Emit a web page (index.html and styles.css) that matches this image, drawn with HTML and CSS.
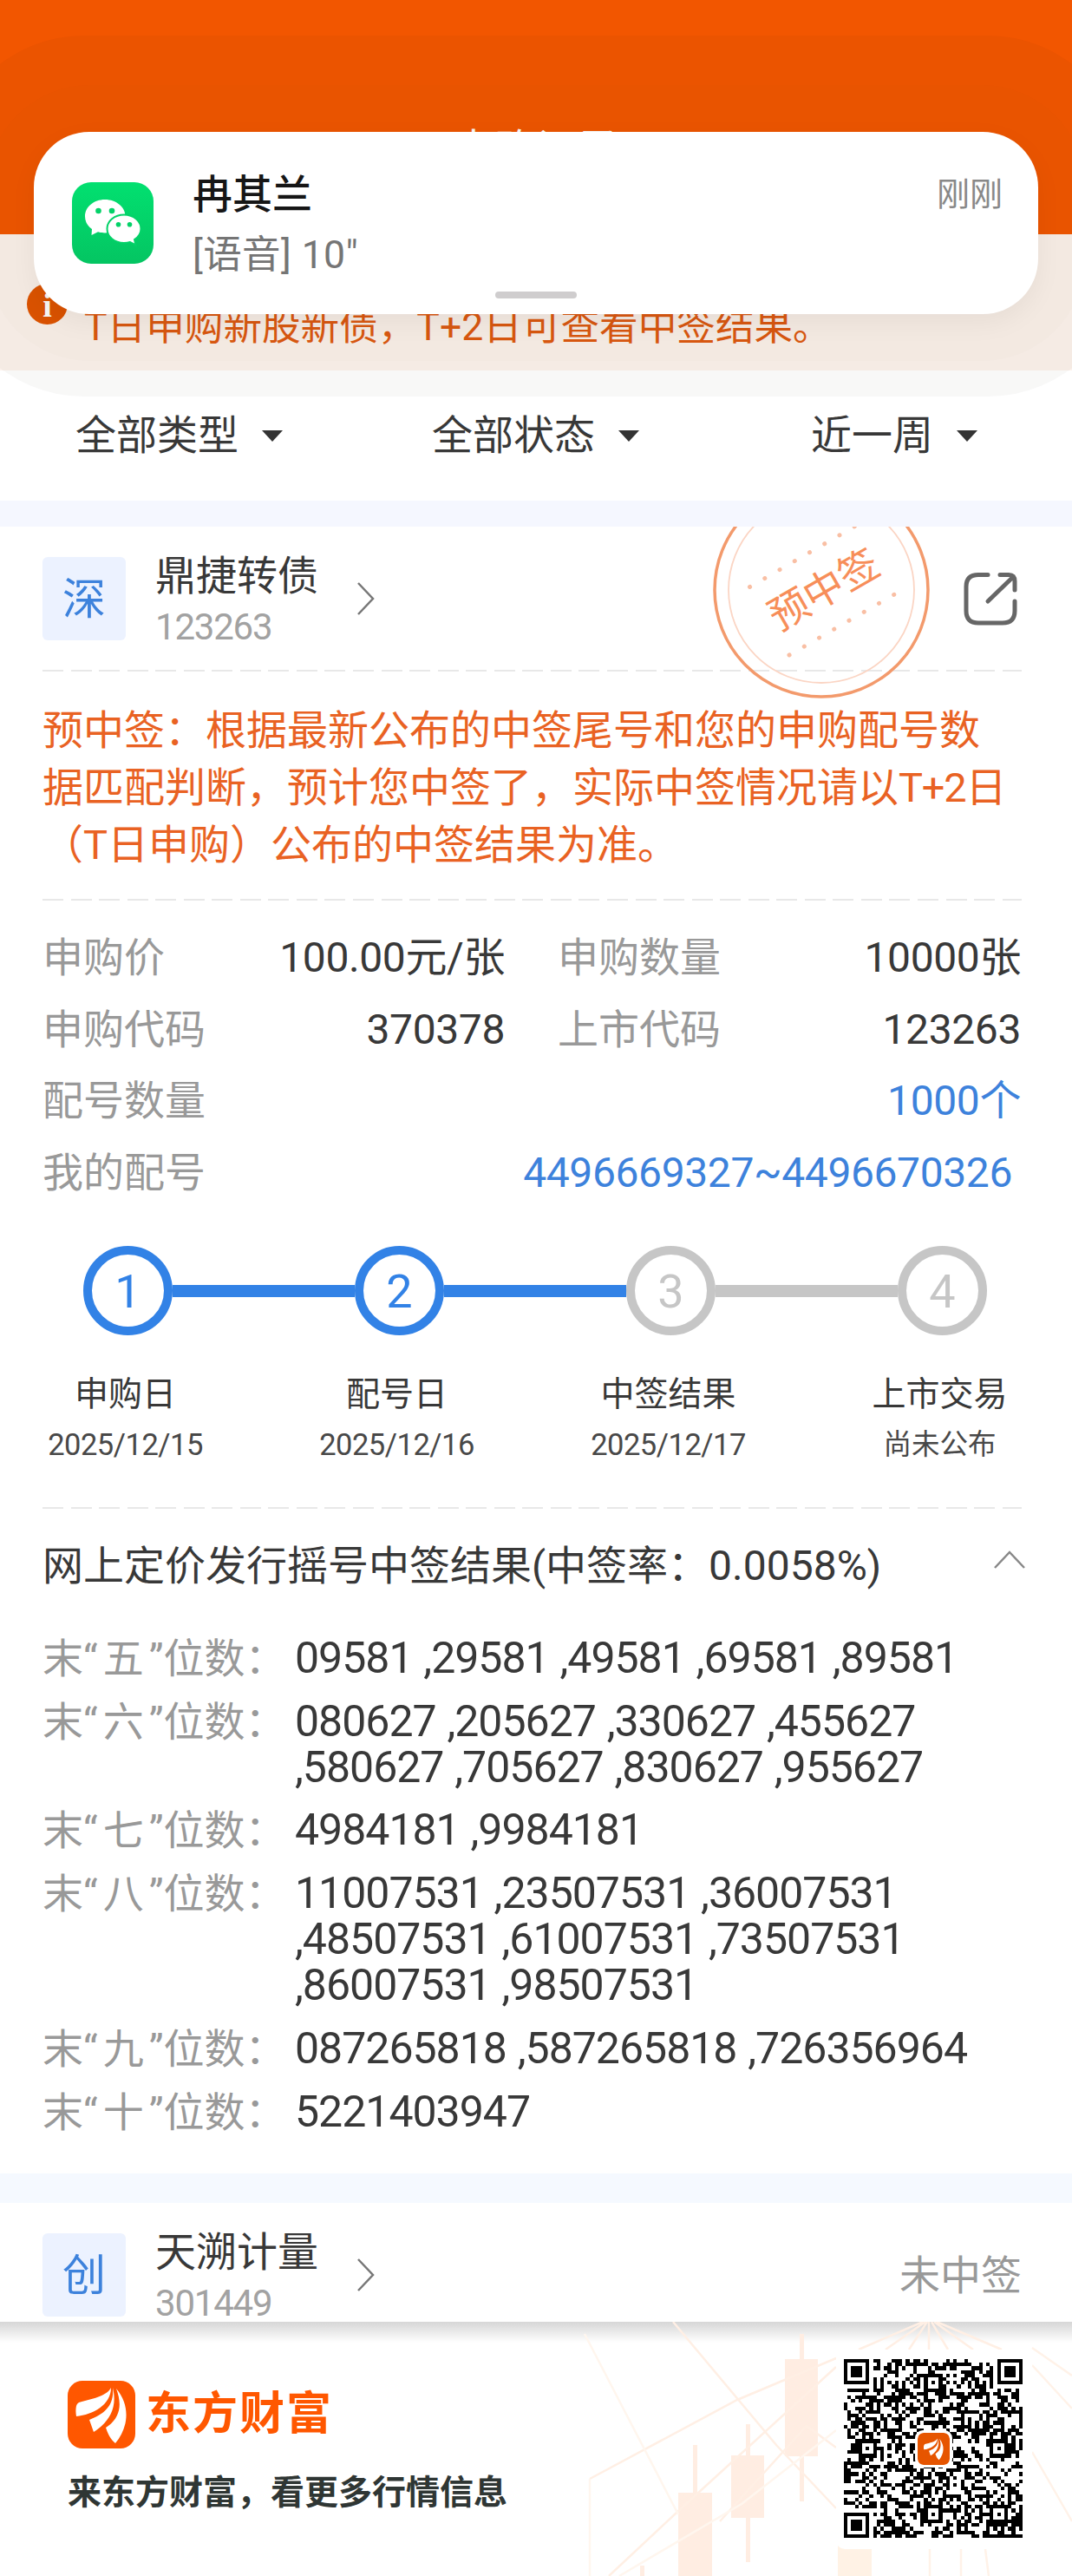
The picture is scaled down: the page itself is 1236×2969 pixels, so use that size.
FILE: index.html
```html
<!DOCTYPE html>
<html lang="zh-CN">
<head>
    <meta charset="UTF-8">
    <meta name="viewport" content="width=device-width, initial-scale=1.0">
    <title>申购记录</title>
    <link rel="stylesheet" href="styles.css">
</head>
<body>
    <div class="page">
        <header class="header">申购记录</header>

        <div class="notice">
            <span class="notice-icon">i</span>
            <span>T日申购新股新债，T+2日可查看中签结果。</span>
        </div>

        <!-- incoming message banner -->
        <div class="banner">
            <svg class="banner-icon" viewBox="0 0 94 94">
                <defs>
                    <linearGradient id="green" x1="0" y1="0" x2="0" y2="1">
                        <stop offset="0" stop-color="#02e070"/>
                        <stop offset="1" stop-color="#04c562"/>
                    </linearGradient>
                </defs>
                <rect width="94" height="94" rx="22" fill="url(#green)"/>
                <path d="M38 20C25 20 15 28.500 15 39.500C15 45.500 18 50.500 23 54L22.500 61L30 57.200C32.500 58 35 58.400 38 58.400C51 58.400 61.500 50 61.500 39.500C61.500 28.500 51 20 38 20Z" fill="#fff"/>
                <path d="M60 37.500C49 37.500 40.500 44.700 40.500 53.800C40.500 63 49 70 60 70C62.500 70 65 69.600 67 69L73.500 72.500L72 66C77 63 79.500 58.800 79.500 53.800C79.500 44.700 71 37.500 60 37.500Z" fill="#fff" stroke="#03d268" stroke-width="2"/>
                <g fill="#03d268">
                    <circle cx="30.500" cy="33" r="3.300"/><circle cx="46" cy="33" r="3.300"/>
                    <circle cx="53.500" cy="48.800" r="2.800"/><circle cx="66.500" cy="48.800" r="2.800"/>
                </g>
            </svg>
            <div class="banner-text">
                <div class="banner-name">冉其兰</div>
                <div class="banner-message">[语音] 10"</div>
            </div>
            <div class="banner-time">刚刚</div>
            <div class="banner-handle"></div>
        </div>

        <nav class="filters">
            <div class="filter">全部类型<i class="arrow"></i></div>
            <div class="filter">全部状态<i class="arrow"></i></div>
            <div class="filter">近一周<i class="arrow"></i></div>
        </nav>

        <section class="card">
            <div class="card-head">
                <div class="badge">深</div>
                <div class="stock">
                    <div class="stock-name">鼎捷转债</div>
                    <div class="stock-code">123263</div>
                </div>
                <svg class="chevron" viewBox="0 0 22 40"><path d="M2 2L19 20L2 38"/></svg>
                <svg class="share" viewBox="0 0 62 62">
                    <path d="M28 3.500H17Q3 3.500 3 17V45Q3 59 17 59H45Q59 59 59 45V34M42 3.500H52Q59 3.500 59 11V21M57 6L28 34"/>
                </svg>
            </div>
            <svg class="stamp" viewBox="0 0 252 252">
                <circle cx="126" cy="126" r="123" fill="none" stroke="#f39a6c" stroke-width="3.500"/>
                <circle cx="126" cy="126" r="107" fill="none" stroke="#fbd5c4" stroke-width="1.800"/>
                <path class="stamp-dots" d="M43.500 122.500L183 42"/>
                <path class="stamp-dots" d="M89 201L213 129.500"/>
                <text x="129" y="142" transform="rotate(-30 129 126)">预中签</text>
            </svg>
            <div class="dash"></div>

            <p class="tip">预中签：根据最新公布的中签尾号和您的申购配号数<br>据匹配判断，预计您中签了，实际中签情况请以<em>T+2</em>日<br>（T日申购）公布的中签结果为准。</p>
            <div class="dash"></div>

            <div class="details">
                <div class="detail"><span>申购价</span><b>100.00元/张</b></div>
                <div class="detail"><span>申购数量</span><b>10000张</b></div>
                <div class="detail"><span>申购代码</span><b>370378</b></div>
                <div class="detail"><span>上市代码</span><b>123263</b></div>
                <div class="detail wide"><span>配号数量</span><b class="link">1000个</b></div>
                <div class="detail wide"><span>我的配号</span><b class="link numbers">4496669327~4496670326</b></div>
            </div>

            <div class="steps">
                <div class="step done">1</div>
                <div class="line done"></div>
                <div class="step done">2</div>
                <div class="line done"></div>
                <div class="step">3</div>
                <div class="line"></div>
                <div class="step">4</div>
            </div>
            <div class="step-labels">
                <div><div class="step-name">申购日</div><div class="step-date">2025/12/15</div></div>
                <div><div class="step-name">配号日</div><div class="step-date">2025/12/16</div></div>
                <div><div class="step-name">中签结果</div><div class="step-date">2025/12/17</div></div>
                <div><div class="step-name">上市交易</div><div class="step-date pending">尚未公布</div></div>
            </div>
            <div class="dash"></div>

            <div class="result-title">
                <span>网上定价发行摇号中签结果(中签率：<em>0.0058%</em>)</span>
                <svg class="fold" viewBox="0 0 36 22"><path d="M1 20L18 2L35 20"/></svg>
            </div>
            <dl class="results">
                <dt>末“<i>五</i>”位数：</dt>
                <dd>09581 ,29581 ,49581 ,69581 ,89581</dd>
                <dt>末“<i>六</i>”位数：</dt>
                <dd>080627 ,205627 ,330627 ,455627<br>,580627 ,705627 ,830627 ,955627</dd>
                <dt>末“<i>七</i>”位数：</dt>
                <dd>4984181 ,9984181</dd>
                <dt>末“<i>八</i>”位数：</dt>
                <dd>11007531 ,23507531 ,36007531<br>,48507531 ,61007531 ,73507531<br>,86007531 ,98507531</dd>
                <dt>末“<i>九</i>”位数：</dt>
                <dd>087265818 ,587265818 ,726356964</dd>
                <dt>末“<i>十</i>”位数：</dt>
                <dd>5221403947</dd>
            </dl>
        </section>

        <section class="card next">
            <div class="card-head">
                <div class="badge">创</div>
                <div class="stock">
                    <div class="stock-name">天溯计量</div>
                    <div class="stock-code">301449</div>
                </div>
                <svg class="chevron" viewBox="0 0 22 40"><path d="M2 2L19 20L2 38"/></svg>
                <div class="status">未中签</div>
            </div>
        </section>

        <footer class="footer">
            <svg class="footer-bg" viewBox="0 0 566 293">
                <g fill="#ffede2">
                    <rect x="112" y="197" width="39" height="96"/><rect x="129" y="142" width="5" height="60"/>
                    <rect x="173" y="154" width="38" height="72"/><rect x="190" y="118" width="5" height="159"/>
                    <rect x="235" y="43" width="38" height="112"/><rect x="252" y="14" width="5" height="193"/>
                    <rect x="296" y="255" width="39" height="38" fill="#fff2e5"/>
                    <rect x="68" y="281" width="5" height="12"/>
                </g>
                <g fill="none" stroke="#ffefe4" stroke-width="2.500">
                    <path d="M106 0L225 142L294 215M10 181L180 90L294 42M32 293L110 220L294 52M160 230L260 120L294 145"/>
                    <path d="M4 14L112 222M10 293V181M44 293L185 210L294 125" stroke="#fff6ee"/>
                    <path d="M394 0L320 32M397 0L351 32M399 0L378 32M401 0V32M404 0L423 32M407 0L452 32M410 0L485 32"/>
                    <path d="M520 30L566 62M520 50L566 100M520 150L566 230M402 262V293M438 262V293M466 262L470 293" stroke="#fff2e8"/>
                </g>
            </svg>
            <div class="brand">
                <div class="brand-row">
                    <svg class="brand-logo" viewBox="0 0 78 78">
                        <rect width="78" height="78" rx="17" fill="#ff5700"/>
                        <g id="feather" fill="#fff">
                            <path d="M50 8C45 18 27 21 13 25C9 27 9 34 10 41C29 39 50 28 50 8Z"/>
                            <path d="M52 8C54 29 42 38 25 45L30 59C47 48 58 32 52 8Z"/>
                            <path d="M56 9C63 27 61 43 44 54C46 60 49 67 55 72C70 54 73 29 56 9Z"/>
                        </g>
                    </svg>
                    <span class="brand-name">东方财富</span>
                </div>
                <div class="slogan">来东方财富，看更多行情信息</div>
            </div>
            <div class="qr">
                <svg viewBox="0 0 49 49" shape-rendering="crispEdges"><path id="qr"/></svg>
                <svg class="qr-logo" viewBox="0 0 78 78">
                    <rect width="78" height="78" rx="15" fill="#e65500"/>
                    <use href="#feather" transform="translate(7 7) scale(.82)"/>
                </svg>
            </div>
        </footer>
    </div>
    <script src="qr.js"></script>
</body>
</html>
```
FILE: styles.css
```css
* {
    box-sizing: border-box;
    margin: 0;
    padding: 0;
}

body {
    font-family: Roboto, 'Noto Sans CJK SC', sans-serif;
    font-size: 47px;
    color: #383838;
    background-color: #fff;
}

i, em {
    font-style: normal;
}

.page {
    position: relative;
    width: 1236px;
    height: 2969px;
    overflow: hidden;
}

.header {
    height: 270px;
    padding-top: 138px;
    font-size: 48px;
    line-height: 70px;
    text-align: center;
    color: #fff;
    background-color: #f25600;
}

.notice {
    display: flex;
    height: 157px;
    padding: 57px 0 0 31px;
    font-size: 44.6px;
    line-height: 101px;
    color: #df5a12;
    background-color: #fcf2ec;
}

.notice-icon {
    width: 47px;
    height: 47px;
    margin-right: 19px;
    border-radius: 50%;
    font: bold 38px/50px 'Liberation Serif', serif;
    text-align: center;
    color: #fff;
    background-color: #e25400;
}

.banner {
    position: absolute;
    top: 152px;
    left: 39px;
    display: flex;
    width: 1158px;
    height: 210px;
    padding: 32px 41px 0 44px;
    border-radius: 64px;
    background-color: #fff;
    box-shadow: 0 10px 30px rgba(0, 0, 0, 0.05),
        0 0 0 54px rgba(120, 60, 0, 0.012),
        0 -8px 0 103px rgba(40, 40, 0, 0.03);
}

.banner-icon {
    width: 94px;
    height: 94px;
    margin-top: 26px;
}

.banner-text {
    flex: 1;
    margin-left: 45px;
}

.banner-name {
    font-size: 46px;
    font-weight: 500;
    line-height: 80px;
    color: #161616;
}

.banner-message {
    font-size: 44.5px;
    line-height: 60px;
    color: #757575;
}

.banner-message::first-line {
    letter-spacing: 0.4px;
}

.banner-time {
    font-size: 38px;
    line-height: 80px;
    color: #888;
}

.banner-handle {
    position: absolute;
    left: 532px;
    bottom: 18px;
    width: 94px;
    height: 8px;
    border-radius: 4px;
    background-color: #cfcdce;
}

.filters {
    display: flex;
    height: 150px;
    padding: 40px 109px 0 87px;
    line-height: 70px;
}

.filter {
    display: flex;
    align-items: center;
    height: 70px;
}

.filter:nth-child(2) {
    margin-left: 172px;
}

.filter:last-child {
    margin-left: auto;
}

.arrow {
    margin-left: 27px;
    border: 12px solid transparent;
    border-top: 13px solid #333;
    border-bottom: 0;
}

.card {
    position: relative;
    height: 1928px;
    padding: 0 58px 0 49px;
    border-top: 30px solid #f5f7ff;
    overflow: hidden;
}

.next {
    height: 171px;
    border-top: 34px solid #f5f9ff;
}

.card-head {
    display: flex;
    height: 165px;
    padding-top: 35px;
}

.badge {
    width: 96px;
    height: 96px;
    border-radius: 6px;
    font-size: 50px;
    line-height: 98px;
    text-align: center;
    color: #3d82dc;
    background-color: #ecf2ff;
}

.stock {
    width: 186px;
    margin-left: 34px;
    white-space: nowrap;
}

.stock-name {
    line-height: 44px;
}

.stock-code {
    font-size: 42px;
    line-height: 74px;
    letter-spacing: -1.2px;
    color: #a2a2a2;
}

.chevron {
    width: 22px;
    height: 40px;
    margin: 28px 0 0 46px;
    fill: none;
    stroke: #777;
    stroke-width: 2.5;
}

.share {
    width: 62px;
    height: 62px;
    margin: 17px 5px 0 auto;
    fill: none;
    stroke: #666;
    stroke-width: 5;
    stroke-linecap: round;
}

.status {
    margin-left: auto;
    line-height: 98px;
    color: #999;
}

.stamp {
    position: absolute;
    top: -53px;
    left: 821px;
    width: 252px;
    height: 252px;
}

.stamp text {
    font-size: 46px;
    text-anchor: middle;
    fill: #f78e59;
}

.stamp-dots {
    fill: none;
    stroke: #f9bfa4;
    stroke-width: 5;
    stroke-linecap: round;
    stroke-dasharray: 0.1 19.8;
}

.dash {
    height: 2px;
    background: repeating-linear-gradient(90deg, #e8e8e8 0, #e8e8e8 24px, transparent 24px, transparent 32.55px);
}

.tip {
    height: 262px;
    padding-top: 35px;
    line-height: 66.2px;
    white-space: nowrap;
    color: #e96223;
}

.tip em {
    letter-spacing: -1.2px;
}

.details {
    display: grid;
    grid-template-columns: 533px 534px;
    column-gap: 61px;
    padding-top: 25px;
    margin-bottom: 1px;
    line-height: 82.7px;
}

.detail {
    display: flex;
    justify-content: space-between;
}

.detail span {
    color: #999;
}

.detail b {
    font-size: 48px;
    font-weight: 400;
    letter-spacing: -0.4px;
}

.detail.wide {
    grid-column: span 2;
}

.detail .link {
    color: #3d82dc;
}

.detail .numbers {
    margin-right: 10px;
}

.steps {
    display: flex;
    align-items: center;
    margin: 42px 0 0 47px;
}

.step {
    width: 103px;
    height: 103px;
    border: 10px solid #c6c6c6;
    border-radius: 50%;
    font-size: 54px;
    line-height: 85px;
    text-align: center;
    color: #c6c6c6;
}

.line {
    width: 210px;
    height: 14px;
    margin-top: 2px;
    background-color: #c6c6c6;
}

.step.done {
    border-color: #3282e6;
    color: #3282e6;
}

.line.done {
    background-color: #3282e6;
}

.step-labels {
    display: grid;
    grid-template-columns: repeat(4, 313px);
    height: 198px;
    margin-left: -61px;
    padding-top: 39px;
    line-height: 58px;
    text-align: center;
}

.step-name {
    font-size: 39px;
}

.step-date {
    font-size: 34.5px;
    letter-spacing: -0.5px;
    color: #484848;
}

.step-date.pending {
    font-size: 32.5px;
    letter-spacing: 0;
}

.result-title {
    display: flex;
    justify-content: space-between;
    height: 146px;
    padding-top: 31px;
    line-height: 70px;
}

.result-title em {
    font-size: 48px;
}

.fold {
    width: 36px;
    height: 22px;
    margin: 17px -4px 0 0;
    fill: none;
    stroke: #888;
    stroke-width: 2.5;
}

.results {
    display: grid;
    grid-template-columns: 291px 1fr;
    row-gap: 19.6px;
    line-height: 53.1px;
    white-space: nowrap;
}

.results dt {
    color: #999;
}

.results dt i {
    margin: 0 6px;
}

.results dd {
    font-size: 50px;
    letter-spacing: -1px;
    word-spacing: 1.4px;
}

.footer {
    position: relative;
    display: flex;
    height: 293px;
    background-color: #fff;
}

/* shadow cast by the list above */
.footer::before {
    content: '';
    position: absolute;
    top: 0;
    left: 0;
    width: 100%;
    height: 24px;
    background: linear-gradient(rgba(0, 0, 0, 0.16), rgba(0, 0, 0, 0));
}

.footer-bg {
    position: absolute;
    top: 0;
    right: 0;
    width: 566px;
    height: 293px;
}

.brand {
    padding: 68px 0 0 78px;
}

.brand-row {
    display: flex;
    align-items: center;
}

.brand-logo {
    width: 78px;
    height: 78px;
}

.brand-name {
    margin-left: 12px;
    font-size: 52px;
    font-weight: 700;
    line-height: 78px;
    letter-spacing: 2px;
    color: #ff5700;
}

.slogan {
    margin-top: 21px;
    font-size: 39px;
    font-weight: 600;
    line-height: 60px;
    color: #2f3634;
}

.qr {
    position: relative;
    width: 226px;
    height: 230px;
    margin: 32px 46px 0 auto;
    padding: 11px 9px;
    border-radius: 10px;
    background-color: #fff;
}

.qr svg {
    display: block;
    width: 206px;
    height: 206px;
}

.qr .qr-logo {
    position: absolute;
    top: 93px;
    left: 91px;
    width: 43px;
    height: 43px;
    border: 3px solid #fff;
    border-radius: 9px;
    background-color: #fff;
}
```
FILE: qr.js
```js
// 49 x 49 modules with finder, alignment and timing patterns
const size = 49;
let seed = 20251215;

function random() {
    seed = (seed * 1103515245 + 12345) % 2147483648;
    return seed / 2147483648;
}

// distance rings around a centre: dark, light, dark
function ring(x, y, cx, cy, max) {
    const d = Math.max(Math.abs(x - cx), Math.abs(y - cy));
    return d <= max ? d : -1;
}

function isDark(x, y) {
    const noise = random() < 0.5;
    for (const [cx, cy] of [[3, 3], [45, 3], [3, 45]]) {
        const d = ring(x, y, cx, cy, 4);
        if (d >= 0) return d !== 2 && d !== 4;
    }
    for (const [cx, cy] of [[24, 6], [6, 24], [42, 24], [24, 42], [42, 42]]) {
        const d = ring(x, y, cx, cy, 2);
        if (d >= 0) return d !== 1;
    }
    if (ring(x, y, 24, 24, 4) >= 0) return false;
    if (x === 6 || y === 6) return (x + y) % 2 === 0;
    return noise;
}

let path = '';
for (let y = 0; y < size; y++) {
    for (let x = 0; x < size; x++) {
        if (isDark(x, y)) path += `M${x} ${y}h1v1h-1z`;
    }
}
document.getElementById('qr').setAttribute('d', path);
```
